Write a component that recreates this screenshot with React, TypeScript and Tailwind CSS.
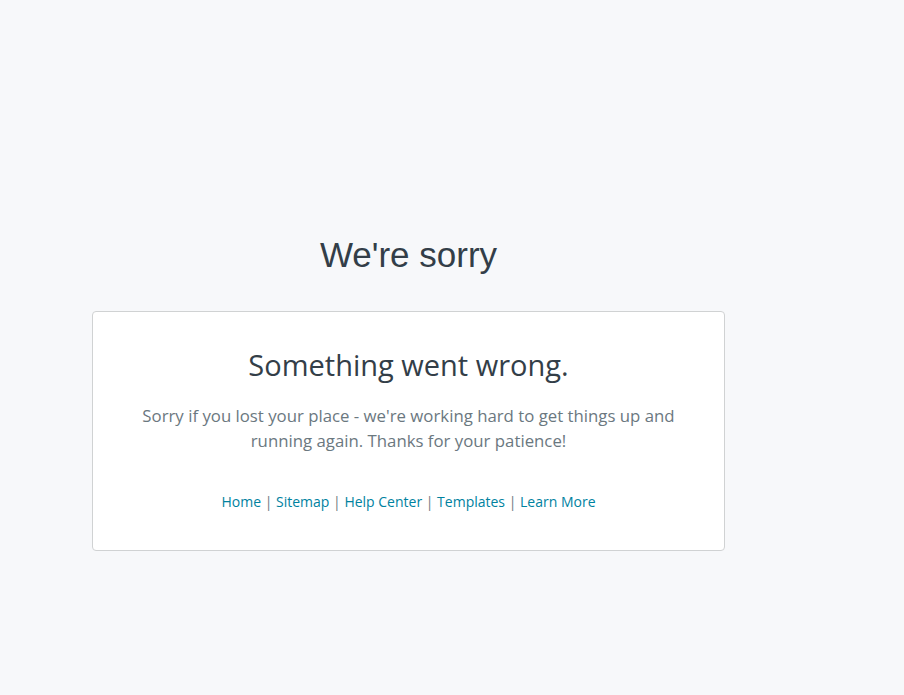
import React from "react";

export default function App() {
  const links = ["Home", "Sitemap", "Help Center", "Templates", "Learn More"];
  return (
    <div className="min-h-[695px] w-full bg-[#f7f8fa] pt-[233px] pl-[92px]" style={{ fontFamily: "'Liberation Sans', Arial, sans-serif" }}>
      <div className="w-[633px]">
        <h1 className="text-center text-[35px] leading-[44px] text-[#333e48]" style={{ fontFamily: "'Liberation Sans', Arial, sans-serif" }}>
          We're sorry
        </h1>
        <div className="mt-[34px] h-[240px] rounded-[4px] border border-[#d0d2d3] bg-white px-8 pt-[33px] text-center" style={{ fontFamily: "'Open Sans', 'Noto Sans', sans-serif" }}>
          <h2 className="text-[29px] leading-[40px] text-[#333e48]">Something went wrong.</h2>
          <p className="mt-[18px] text-[16.8px] leading-[25px] text-[#6b787f]">
            Sorry if you lost your place - we're working hard to get things up and running again. Thanks for your patience!
          </p>
          <div className="mt-[39px] text-[14px] leading-[20px] text-[#6b787f]">
            {links.map((l, i) => (
              <React.Fragment key={l}>
                {i > 0 && <span className="text-[#6b787f]"> | </span>}
                <a className="text-[#00829f]">{l}</a>
              </React.Fragment>
            ))}
          </div>
        </div>
      </div>
    </div>
  );
}
